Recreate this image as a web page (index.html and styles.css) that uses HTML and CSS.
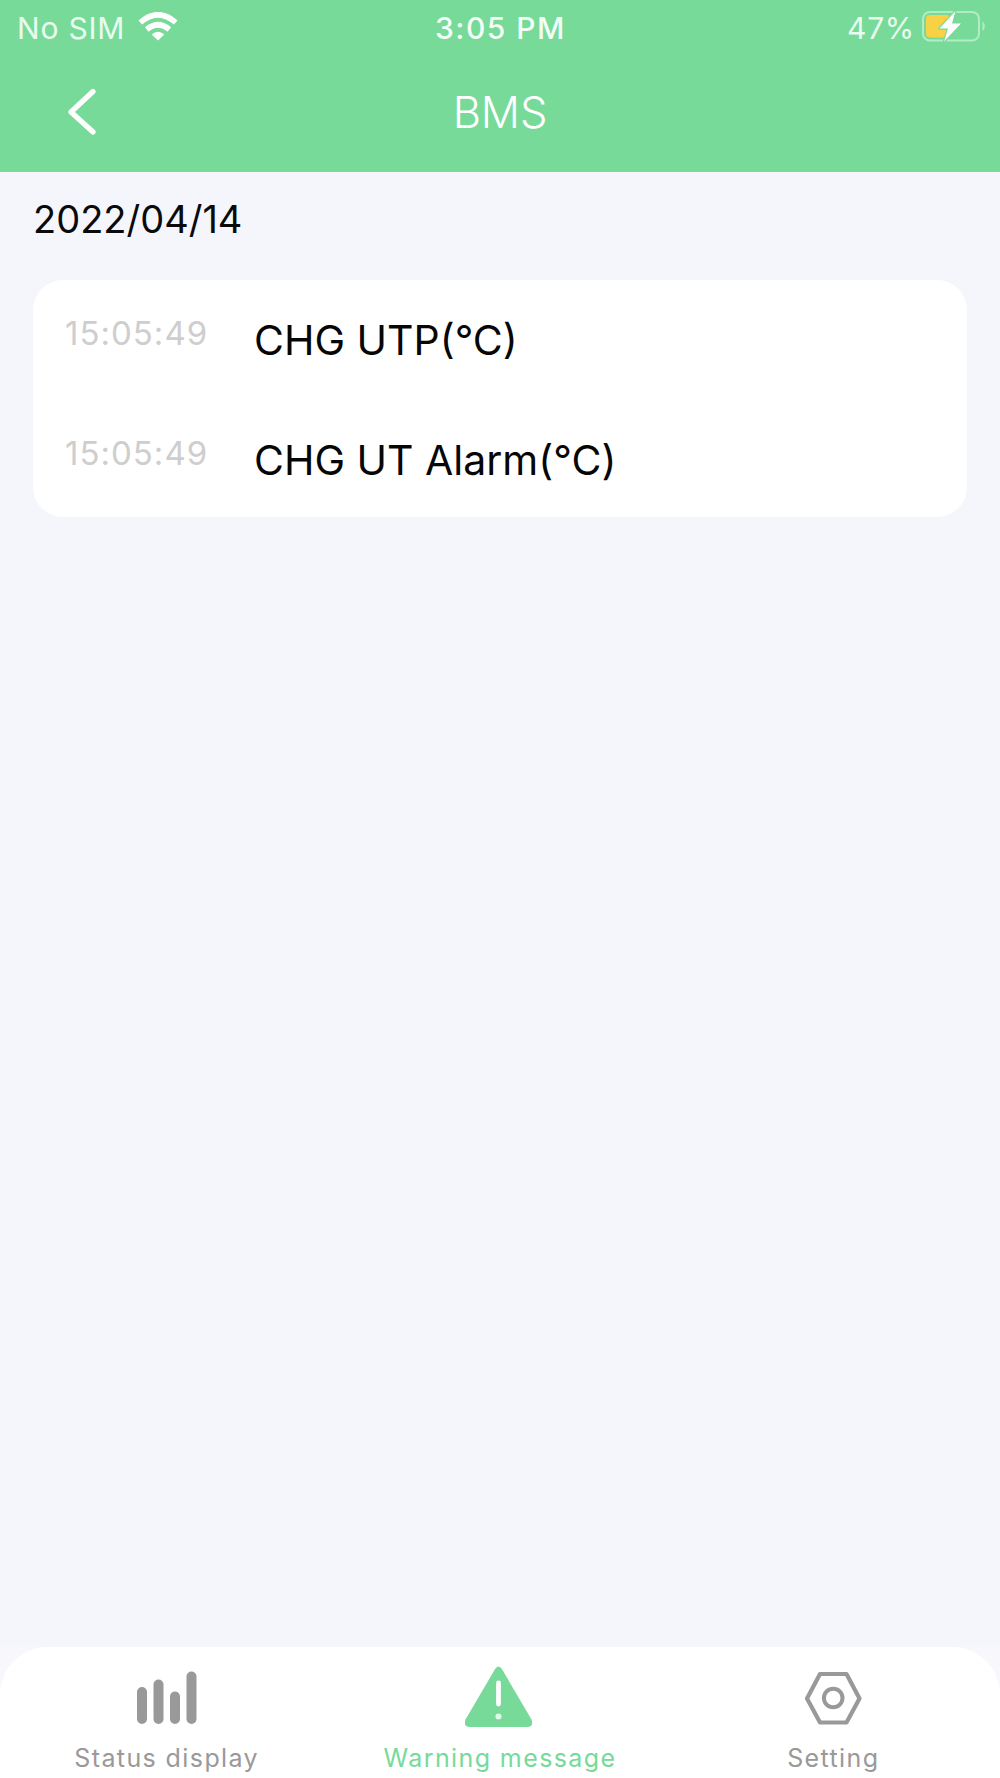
FILE: index.html
```html
<!DOCTYPE html>
<html lang="en">
<head>
<meta charset="utf-8">
<title>BMS</title>
<link rel="stylesheet" href="styles.css">
</head>
<body>
<div class="screen">
  <header class="header">
    <div class="statusbar">
      <div class="carrier">
        <span class="carrier-name">No SIM</span>
        <svg class="wifi" width="40" height="30" viewBox="0 0 40 30">
          <path d="M2.300 10.500Q20-5 37.700 10.500M8.700 17.500Q20 8 31.300 17.500" fill="none" stroke="#fff" stroke-width="5.600"/>
          <path d="M13.700 22.500Q20 17 26.300 22.500L20 28.500Z" fill="#fff"/>
        </svg>
      </div>
      <span class="clock">3:05 PM</span>
      <div class="power">
        <span class="percent">47%</span>
        <svg class="battery" width="66" height="34" viewBox="0 0 66 34">
          <rect x="2" y="3" width="56" height="28.500" rx="7" fill="none" stroke="#b0edc4" stroke-width="2"/>
          <path d="M61.500 12.500c3 1 3 8 0 9.500z" fill="#b0edc4"/>
          <rect x="5" y="6" width="24" height="22.500" rx="4" fill="#f9d144"/>
          <path d="M34.500 2L18.500 19.500H27L23 32.500L40 14.500H31Z" fill="#fff" stroke="#77da99" stroke-width="2.500" paint-order="stroke" stroke-linejoin="round"/>
        </svg>
      </div>
    </div>
    <nav class="navbar">
      <svg class="back" width="30" height="48" viewBox="0 0 30 48">
        <path d="M27 3.500L5 24L27 44" fill="none" stroke="#fff" stroke-width="5.200" stroke-linecap="round" stroke-linejoin="round"/>
      </svg>
      <h1 class="title">BMS</h1>
    </nav>
  </header>
  <main class="content">
    <h2 class="date">2022/04/14</h2>
    <ul class="card">
      <li class="row"><time class="time">15:05:49</time><span class="message">CHG UTP(°C)</span></li>
      <li class="row"><time class="time">15:05:49</time><span class="message">CHG UT Alarm(°C)</span></li>
    </ul>
  </main>
  <footer class="tabbar">
    <div class="tab">
      <svg width="70" height="64" viewBox="0 0 70 64">
        <path d="M10 27V54M26.500 19.500V54M43 31.500V54M59.500 11.500V54" fill="none" stroke="#999" stroke-width="10" stroke-linecap="round"/>
      </svg>
      <span class="label">Status display</span>
    </div>
    <div class="tab active">
      <svg width="70" height="64" viewBox="0 0 70 64">
        <path d="M29.800 4.500Q33.500 -1.500 37.200 4.500L66.500 54.500Q69 62 62 62H5Q-2 62 .5 54.500Z" fill="#77da99"/>
        <path d="M33.500 18V39" stroke="#fff" stroke-width="4.800" stroke-linecap="round"/>
        <circle cx="33.500" cy="51.500" r="3" fill="#e2f9e9"/>
      </svg>
      <span class="label">Warning message</span>
    </div>
    <div class="tab">
      <svg width="70" height="64" viewBox="0 0 70 64">
        <path d="M22 9H48.500L61.500 33.500L48.500 57.500H22L9 33.500Z" fill="none" stroke="#999" stroke-width="4.200" stroke-linejoin="round"/>
        <circle cx="35.200" cy="33" r="9.300" fill="none" stroke="#999" stroke-width="4"/>
      </svg>
      <span class="label">Setting</span>
    </div>
  </footer>
</div>
</body>
</html>
```
FILE: styles.css
```css
* { box-sizing: border-box; }
body { margin: 0; font-family: Inter, "Liberation Sans", sans-serif; background: #f8f8fc; }
h1, h2, ul { margin: 0; padding: 0; font-weight: 400; list-style: none; }
svg { display: block; flex: none; }
span, time, h1, h2 { white-space: nowrap; }

.screen { display: flex; flex-direction: column; height: 1778px; }

.header { height: 172px; background: #77da99; color: #fff; border-bottom: 1px solid #9fc3af; }
.statusbar { display: grid; grid-template-columns: 1fr auto 1fr; align-items: center; height: 54px; padding: 2px 13px 0 17px; font-size: 30px; color: #e9fcef; }
.carrier { display: flex; align-items: center; gap: 14px; }
.carrier-name { width: 107px; font-weight: 400; letter-spacing: .8px; }
.wifi { margin-top: -2px; }
.clock { margin-left: -3px; font-weight: 500; letter-spacing: 1.5px; color: #f3fef6; }
.power { display: flex; align-items: center; justify-content: flex-end; gap: 6px; }
.percent { font-weight: 400; letter-spacing: .7px; }
.battery { margin-top: -4px; }

.navbar { display: grid; grid-template-columns: 1fr auto 1fr; align-items: center; height: 116px; padding: 0 66px; }
.title { font-size: 43.5px; font-weight: 300; letter-spacing: -.1px; }

.content { flex: 1; padding: 0 33px; background: #f4f6fb; }
.date { height: 108px; line-height: 94px; font-size: 38px; color: #0a0a0c; }
.card { height: 237px; padding: 0 32px; background: #fff; border-radius: 30px; }
.row { display: grid; grid-template-columns: 189px 1fr; height: 120px; line-height: 121px; }
.time { font-size: 33px; font-weight: 400; line-height: 107px; letter-spacing: 1px; color: #cecece; }
.message { font-size: 41px; color: #060606; }

.tabbar { display: grid; grid-template-columns: repeat(3, 1fr); height: 131px; padding-top: 18px; background: #fff; border-radius: 48px 48px 0 0; }
.tab { display: flex; flex-direction: column; align-items: center; color: #999; }
.label { font-size: 25px; line-height: 58px; letter-spacing: 1.4px; }
.active { color: #77da99; }
```
